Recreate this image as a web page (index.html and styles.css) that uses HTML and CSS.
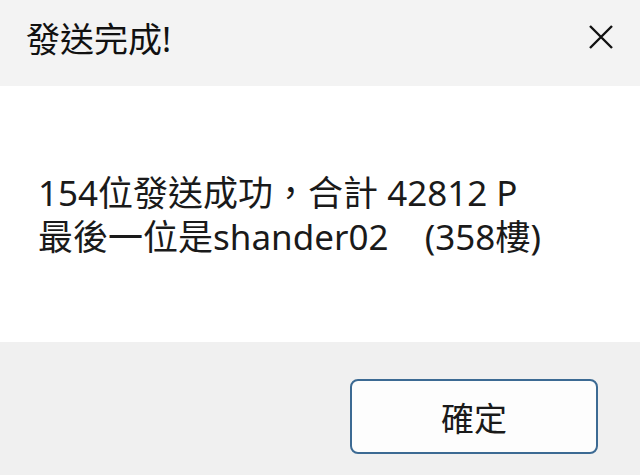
FILE: index.html
```html
<!DOCTYPE html>
<html lang="zh-Hant">
<head>
  <meta charset="UTF-8" />
  <title>發送完成!</title>
  <link rel="stylesheet" href="styles.css">
</head>
<body>
  <div class="dialog">
    <div class="titlebar">
      <span class="title">發送完成!</span>
      <button class="close" aria-label="關閉">
        <svg width="26" height="26" viewBox="0 0 26 26">
          <path d="M2 2 L24 24 M24 2 L2 24" stroke="#111" stroke-width="2.4" fill="none" />
        </svg>
      </button>
    </div>
    <div class="content">
      <p>154位發送成功，合計 42812 P<br>最後一位是shander02&nbsp;&nbsp;&nbsp;&nbsp;(358樓)</p>
    </div>
    <div class="footer">
      <button class="ok">確定</button>
    </div>
  </div>
</body>
</html>
```

FILE: styles.css
```css
* {
  box-sizing: border-box;
  font-family: "Noto Sans", "Noto Sans CJK TC", sans-serif;
}

body {
  margin: 0;
  background: #f0f0f0;
}

.dialog {
  width: 640px;
  height: 475px;
  display: flex;
  flex-direction: column;
}

.titlebar {
  height: 86px;
  background: #f3f3f3;
  display: flex;
  align-items: center;
  justify-content: space-between;
  padding: 0 26px 12px 26px;
}

.title {
  font-size: 34px;
  color: #111;
}

.close {
  border: none;
  background: none;
  padding: 0;
  display: flex;
}

.content {
  height: 256px;
  background: #fff;
  padding: 85px 38px 0;
}

.content p {
  margin: 0;
  font-size: 35px;
  line-height: 44px;
  color: #1a1a1a;
}

.footer {
  flex: 1;
  background: #f0f0f0;
  display: flex;
  justify-content: flex-end;
  align-items: flex-start;
  padding: 37px 42px 0 0;
}

.ok {
  width: 248px;
  height: 75px;
  border: 2px solid #3c6a93;
  border-radius: 8px;
  background: #fdfdfd;
  font-size: 33px;
  color: #1a1a1a;
}
```
